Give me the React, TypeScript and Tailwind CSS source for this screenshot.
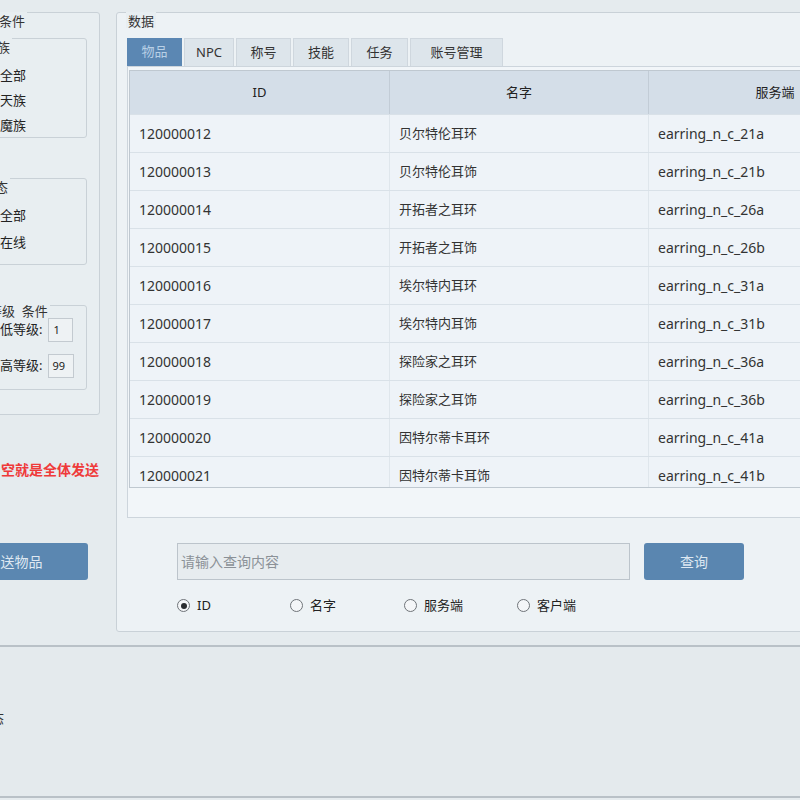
import React from "react";

const rows = [
  ["120000012", "贝尔特伦耳环", "earring_n_c_21a"],
  ["120000013", "贝尔特伦耳饰", "earring_n_c_21b"],
  ["120000014", "开拓者之耳环", "earring_n_c_26a"],
  ["120000015", "开拓者之耳饰", "earring_n_c_26b"],
  ["120000016", "埃尔特内耳环", "earring_n_c_31a"],
  ["120000017", "埃尔特内耳饰", "earring_n_c_31b"],
  ["120000018", "探险家之耳环", "earring_n_c_36a"],
  ["120000019", "探险家之耳饰", "earring_n_c_36b"],
  ["120000020", "因特尔蒂卡耳环", "earring_n_c_41a"],
  ["120000021", "因特尔蒂卡耳饰", "earring_n_c_41b"],
];

const tabs = [
  { label: "物品", w: "w-[55px]" },
  { label: "NPC", w: "w-[50px]" },
  { label: "称号", w: "w-[55px]" },
  { label: "技能", w: "w-[56px]" },
  { label: "任务", w: "w-[57px]" },
  { label: "账号管理", w: "w-[93px]" },
];

function GroupBox({
  title,
  titleClass,
  className,
  children,
}: {
  title: string;
  titleClass: string;
  className: string;
  children?: React.ReactNode;
}) {
  return (
    <div className={`relative rounded-[3px] border border-[#c9d1d7] ${className}`}>
      <span
        className={`absolute ${titleClass} bg-[#e8eef1] px-[2px] pt-[2px] text-[13px] leading-[14px] text-[#333]`}
      >
        {title}
      </span>
      {children}
    </div>
  );
}

function Radio({ label, checked }: { label: string; checked?: boolean }) {
  return (
    <label className="flex items-center gap-[7px]">
      <span className="flex h-[13px] w-[13px] items-center justify-center rounded-full border border-[#6f7479] bg-[#f4f6f8]">
        {checked && <span className="h-[6px] w-[6px] rounded-full bg-[#2a2d30]" />}
      </span>
      <span className="text-[13px] leading-none text-[#222]">{label}</span>
    </label>
  );
}

export default function App() {
  return (
    <div
      className="flex h-[800px] w-[800px] flex-col overflow-hidden bg-[#e5ebee]"
      style={{ fontFamily: '"Noto Sans", "Noto Sans CJK SC", sans-serif' }}
    >
      <div className="flex h-[645px] shrink-0 gap-4 pt-[12px]">
        {/* left column: conditions */}
        <div className="ml-[-61px] flex w-[161px] shrink-0 flex-col">
          <GroupBox title="发送条件" titleClass="top-[-1px] left-[31px]" className="h-[403px] bg-[#e8eef1] px-3 pt-[25px]">
            <GroupBox title="种族" titleClass="top-[-1px] left-[29px]" className="h-[100px] bg-[#e8eef1]">
              <div className="flex flex-col gap-[12px] pl-[27px] pt-[30px] text-[14px]">
                <Radio label="全部" checked />
                <Radio label="天族" />
                <Radio label="魔族" />
              </div>
            </GroupBox>
            <GroupBox title="状态" titleClass="top-[-1px] left-[27px]" className="mt-[40px] h-[87px] bg-[#e8eef1]">
              <div className="flex flex-col gap-[14px] pl-[27px] pt-[30px]">
                <Radio label="全部" checked />
                <Radio label="在线" />
              </div>
            </GroupBox>
            <GroupBox title="等级  条件" titleClass="top-[-4px] left-[34px] whitespace-pre" className="mt-[40px] h-[85px] bg-[#e8eef1]">
              <div className="flex flex-col gap-[12px] pl-[34px] pt-[12px] text-[13px] text-[#222]">
                <div className="flex items-center gap-[6px]">
                  <span>最低等级:</span>
                  <span className="flex h-[24px] w-[25px] items-center border border-[#c3cad0] bg-[#eef2f4] pl-[4px] text-[11px]">
                    1
                  </span>
                </div>
                <div className="flex items-center gap-[6px]">
                  <span>最高等级:</span>
                  <span className="flex h-[24px] w-[26px] items-center border border-[#c3cad0] bg-[#eef2f4] pl-[3px] text-[11px]">
                    99
                  </span>
                </div>
              </div>
            </GroupBox>
          </GroupBox>
          <p className="mt-[46px] whitespace-nowrap pl-[6px] text-[14px] font-bold leading-[18px] text-[#ef3a3a]">
            玩家名为空就是全体发送
          </p>
          <button className="mt-[64px] h-[37px] w-[149px] rounded-[3px] bg-[#5b87b1] pl-[2px] text-[14px] text-[#dfe8f1]">
            发送物品
          </button>
        </div>

        {/* right column: data */}
        <GroupBox title="数据" titleClass="top-[-1px] left-[9px]" className="h-[620px] w-[730px] shrink-0 bg-[#edf2f5] pl-[10px] pt-[25px]">
          <div className="flex h-[28px] items-end gap-[2px]">
            {tabs.map((t, i) => (
              <div
                key={t.label}
                className={`flex h-[28px] ${t.w} items-center justify-center text-[13px] ${
                  i === 0
                    ? "bg-[#5b87b3] text-[#b9d0e6]"
                    : "border border-b-0 border-[#cfd7de] bg-[#dde5eb] text-[#333]"
                }`}
              >
                {t.label}
              </div>
            ))}
          </div>
          <div className="h-[452px] border border-[#cdd5dc] bg-[#f2f6f9] pl-[1px] pt-[3px]">
            <div className="h-[418px] overflow-hidden border border-[#bfc8d0] bg-[#eef3f8]">
              <div className="grid h-[43px] grid-cols-[260px_259px_260px] bg-[#d4dee8] text-[13px] text-[#222]">
                <div className="flex items-center justify-center border-r border-[#c2ccd6]">ID</div>
                <div className="flex items-center justify-center border-r border-[#c2ccd6]">名字</div>
                <div className="flex items-center justify-center pr-[8px]">服务端</div>
              </div>
              {rows.map((r) => (
                <div
                  key={r[0]}
                  className="grid h-[38px] grid-cols-[260px_259px_260px] border-t border-[#d9e1e8] text-[14px] text-[#333]"
                >
                  <div className="flex items-center border-r border-[#dfe6ec] pl-[9px]">{r[0]}</div>
                  <div className="flex items-center border-r border-[#dfe6ec] pl-[9px] text-[13px]">{r[1]}</div>
                  <div className="flex items-center pl-[9px]">{r[2]}</div>
                </div>
              ))}
            </div>
          </div>
          <div className="mt-[25px] flex gap-[14px] pl-[50px]">
            <div className="flex h-[37px] w-[453px] items-center border border-[#bcc4cb] bg-[#e7ecef] pl-[3px] text-[14px] text-[#8b9197]">
              请输入查询内容
            </div>
            <button className="h-[37px] w-[100px] rounded-[3px] bg-[#5a86b0] text-[14px] text-[#dde8f2]">查询</button>
          </div>
          <div className="mt-[19px] flex pl-[50px]">
            <div className="w-[113px]">
              <Radio label="ID" checked />
            </div>
            <div className="w-[114px]">
              <Radio label="名字" />
            </div>
            <div className="w-[113px]">
              <Radio label="服务端" />
            </div>
            <Radio label="客户端" />
          </div>
        </GroupBox>
      </div>

      {/* bottom area */}
      <div className="flex h-[151px] shrink-0 items-center border-t-2 border-[#b9c1c7] bg-[#e4eaed]">
        <span className="ml-[-48px] pb-[6px] text-[13px] text-[#333]">当前状态</span>
      </div>
      <div className="border-t-2 border-[#b9c1c7]" />
    </div>
  );
}
